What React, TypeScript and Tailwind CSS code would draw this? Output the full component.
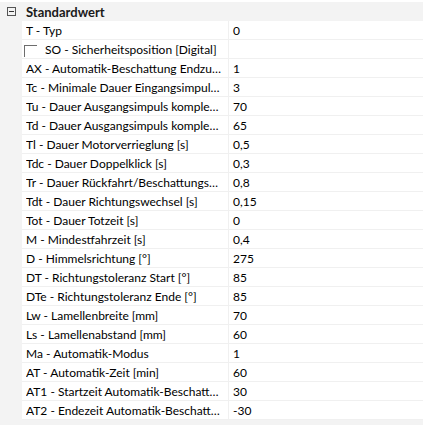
import React from 'react';

type Row = { label: string; value: string; checkbox?: boolean };

const rows: Row[] = [
  { label: 'T - Typ', value: '0' },
  { label: 'SO - Sicherheitsposition [Digital]', value: '', checkbox: true },
  { label: 'AX - Automatik-Beschattung Endzustand', value: '1' },
  { label: 'Tc - Minimale Dauer Eingangsimpuls [s]', value: '3' },
  { label: 'Tu - Dauer Ausgangsimpuls komplett hoch [s]', value: '70' },
  { label: 'Td - Dauer Ausgangsimpuls komplett runter [s]', value: '65' },
  { label: 'Tl - Dauer Motorverrieglung [s]', value: '0,5' },
  { label: 'Tdc - Dauer Doppelklick [s]', value: '0,3' },
  { label: 'Tr - Dauer Rückfahrt/Beschattungsposition [s]', value: '0,8' },
  { label: 'Tdt - Dauer Richtungswechsel [s]', value: '0,15' },
  { label: 'Tot - Dauer Totzeit [s]', value: '0' },
  { label: 'M - Mindestfahrzeit [s]', value: '0,4' },
  { label: 'D - Himmelsrichtung [°]', value: '275' },
  { label: 'DT - Richtungstoleranz Start [°]', value: '85' },
  { label: 'DTe - Richtungstoleranz Ende [°]', value: '85' },
  { label: 'Lw - Lamellenbreite [mm]', value: '70' },
  { label: 'Ls - Lamellenabstand [mm]', value: '60' },
  { label: 'Ma - Automatik-Modus', value: '1' },
  { label: 'AT - Automatik-Zeit [min]', value: '60' },
  { label: 'AT1 - Startzeit Automatik-Beschattung [min]', value: '30' },
  { label: 'AT2 - Endezeit Automatik-Beschattung [min]', value: '-30' },
];

const PropertyRow = ({ row }: { row: Row }) => (
  <div className="flex h-[19px] border-b border-[#f0f0f0]">
    <div className="flex w-[207px] min-w-0 items-center border-r border-[#f0f0f0] pr-[6px] pl-[4px]">
      {row.checkbox && (
        <span className="mr-[8px] ml-[-2px] mt-[4px] h-[12px] w-[13px] shrink-0 border-t border-l border-[#6d6d6d]" />
      )}
      <span className="truncate pt-[1px] leading-[17px]">{row.label}</span>
    </div>
    <div className="flex flex-1 items-center pl-[4px]">
      <span className="pt-[1px] leading-[17px]">{row.value}</span>
    </div>
  </div>
);

export default function App() {
  return (
    <div className="h-[425px] w-[423px] bg-white pt-[2px] font-['Lato',sans-serif] text-[12px] text-black">
      {/* section header */}
      <div className="flex h-[19px] items-center bg-[#f3f3f3]">
        <div className="flex w-[22px] justify-center">
          <span className="flex h-[9px] w-[9px] items-center justify-center border border-[#555]">
            <span className="h-px w-[5px] bg-[#333]" />
          </span>
        </div>
        <span className="pt-[1px] pl-[4px] text-[13px] leading-[17px] font-bold text-[#1a1a1a]">Standardwert</span>
      </div>
      <div className="flex h-[404px] bg-[#f3f3f3]">
        <div className="w-[22px] shrink-0" />
        <div className="flex-1 self-start bg-white">
          {rows.map((r) => (
            <PropertyRow key={r.label} row={r} />
          ))}
        </div>
      </div>
    </div>
  );
}
